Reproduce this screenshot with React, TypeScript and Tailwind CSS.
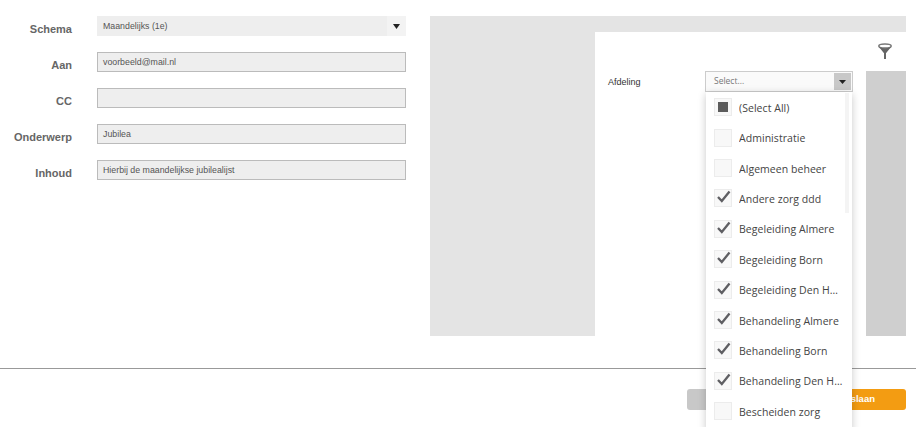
const fields = [
  { label: 'Aan', value: 'voorbeeld@mail.nl' },
  { label: 'CC', value: '' },
  { label: 'Onderwerp', value: 'Jubilea' },
  { label: 'Inhoud', value: 'Hierbij de maandelijkse jubilealijst' },
];

const options = [
  { label: 'Administratie', checked: false },
  { label: 'Algemeen beheer', checked: false },
  { label: 'Andere zorg ddd', checked: true },
  { label: 'Begeleiding Almere', checked: true },
  { label: 'Begeleiding Born', checked: true },
  { label: 'Begeleiding Den Haag', checked: true },
  { label: 'Behandeling Almere', checked: true },
  { label: 'Behandeling Born', checked: true },
  { label: 'Behandeling Den Haag', checked: true },
  { label: 'Bescheiden zorg', checked: false },
];

function Check() {
  return (
    <svg width="18" height="18" viewBox="0 0 18 18" className="absolute -top-[1px] -left-[1px]">
      <path d="M4 8 L7.8 12 L15.5 2.5" fill="none" stroke="#5f5f63" strokeWidth="2.3" />
    </svg>
  );
}

function Row({ label, checked, partial }: { label: string; checked?: boolean; partial?: boolean }) {
  return (
    <div className="flex h-[30.4px] items-center pl-2">
      <div className="relative flex h-[18px] w-[18px] shrink-0 items-center justify-center border border-[#ececec] bg-[#f8f8f8]">
        {partial && <div className="h-[10px] w-[10px] bg-[#5c5c5c]" />}
        {checked && <Check />}
      </div>
      <span className="ml-[7px] w-[104px] truncate pt-[3px] text-[10.5px] tracking-[0.05px] text-[#444]">{label}</span>
    </div>
  );
}

export default function App() {
  return (
    <div className="relative flex h-[427px] w-[916px] flex-col overflow-hidden bg-white font-['Liberation_Sans',sans-serif]">
      <div className="flex h-[369px] border-b border-[#999] pt-4">
        {/* Form */}
        <div className="flex w-[430px] shrink-0 flex-col gap-4">
          <div className="flex h-5 items-center">
            <label className="w-[72px] pt-[6px] text-right text-[11px] font-bold text-[#666]">Schema</label>
            <div className="ml-[25px] flex h-5 w-[309px] items-center justify-between bg-[#eee] pl-[6px]">
              <span className="pt-px text-[8.8px] text-[#555]">Maandelijks (1e)</span>
              <span className="flex h-5 w-[19px] items-center justify-center bg-[#f3f3f3]">
                <svg width="7" height="5" viewBox="0 0 7 5"><path d="M0 0H7L3.5 5Z" fill="#222" /></svg>
              </span>
            </div>
          </div>
          {fields.map((f) => (
            <div key={f.label} className="flex h-5 items-center">
              <label className="w-[72px] pt-[6px] text-right text-[11px] font-bold text-[#666]">{f.label}</label>
              <div className="ml-[25px] flex h-5 w-[309px] items-center border border-[#bbb] bg-[#eee] pl-[5px]">
                <span className="pt-px text-[8.8px] text-[#555]">{f.value}</span>
              </div>
            </div>
          ))}
        </div>

        {/* Filter panel */}
        <div className="mr-[10px] flex h-[320px] flex-1 bg-[#e4e4e4] pt-4 pl-[165px]">
          <div className="relative flex-1 bg-white">
            <svg width="16" height="17" viewBox="0 0 16 17" className="absolute top-[11px] left-[282px]">
              <ellipse cx="8" cy="3" rx="6.2" ry="2.1" fill="none" stroke="#777" strokeWidth="1.5" />
              <path d="M2 4 L6.8 10 H9.2 L14 4 Q8 6.4 2 4Z" fill="#666" />
              <rect x="7" y="9.5" width="2" height="6.5" fill="#666" />
            </svg>
            <div className="flex pt-[39px]">
              <div className="flex w-[110px] pt-[5px] pl-[13px] text-[9px] text-[#333]">Afdeling</div>
              <div className="flex h-[21px] w-[148px] items-center justify-between border border-[#ccc] bg-[#fafafa] pr-[1px] pl-[8px] font-['Open_Sans',sans-serif]">
                <span className="text-[8.5px] text-[#777]">Select...</span>
                <span className="flex h-[17px] w-[17px] items-center justify-center bg-[#c8c8c8]">
                  <svg width="7" height="4" viewBox="0 0 7 4"><path d="M0 0H7L3.5 4Z" fill="#222" /></svg>
                </span>
              </div>
              <div className="ml-[13px] h-[265px] flex-1 bg-[#cfcfcf]" />
            </div>
          </div>
        </div>
      </div>

      {/* Footer */}
      <div className="flex justify-end pt-[20px] pr-[10px]">
        <button className="h-[21px] w-[100px] rounded-[3px] bg-[#c8c8c8]" />
        <button className="ml-[19px] h-[21px] w-[100px] rounded-[3px] bg-[#f39c12] pr-[31px] text-right text-[9.5px] font-bold text-white">
          Opslaan
        </button>
      </div>

      {/* Open dropdown, lies over the footer */}
      <div className="absolute top-[92px] left-[706px] h-[340px] w-[146px] bg-white font-['Open_Sans',sans-serif] shadow-[0_2px_8px_rgba(0,0,0,0.22)]">
        <div className="absolute top-[1px] right-[3px] h-[120px] w-[4px] bg-[#f4f4f4]" />
        <div className="relative">
          <Row label="(Select All)" partial />
          {options.map((o) => (
            <Row key={o.label} label={o.label} checked={o.checked} />
          ))}
        </div>
      </div>
    </div>
  );
}
